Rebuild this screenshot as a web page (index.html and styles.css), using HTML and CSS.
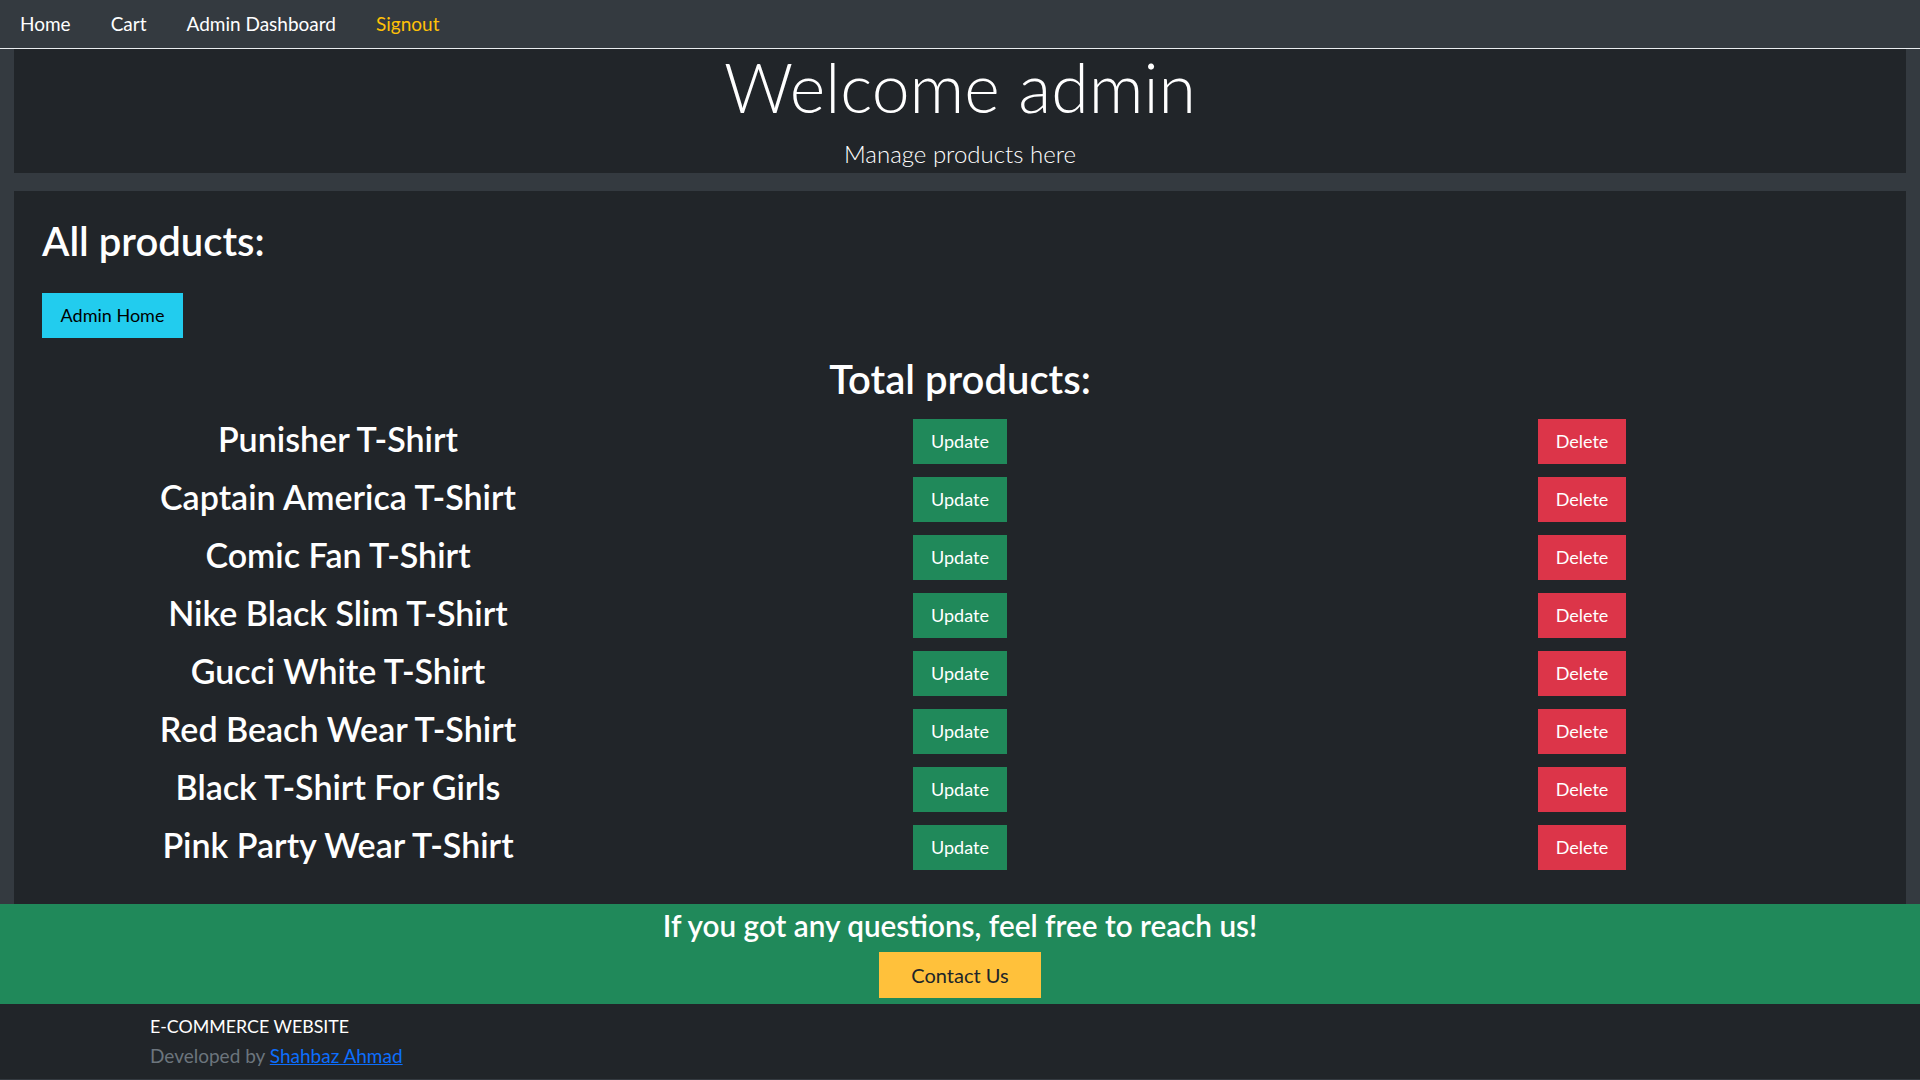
FILE: index.html
```html
<!DOCTYPE html>
<html lang="en">
<head>
<meta charset="utf-8">
<title>Admin - Products</title>
<link rel="stylesheet" href="styles.css">
</head>
<body>
<nav class="navbar">
  <a class="nav-link" href="#">Home</a>
  <a class="nav-link" href="#">Cart</a>
  <a class="nav-link" href="#">Admin Dashboard</a>
  <a class="nav-link nav-warn" href="#">Signout</a>
</nav>
<main class="wrap">
  <section class="hero">
    <h1 class="hero-title">Welcome admin</h1>
    <p class="hero-lead">Manage products here</p>
  </section>
  <section class="panel">
    <div class="panel-head">
      <h1 class="section-title">All products:</h1>
      <a class="btn btn-info" href="#">Admin Home</a>
    </div>
    <h2 class="total-title">Total products:</h2>
    <div class="product-grid">
      <div class="cell"><h2 class="product-name">Punisher T-Shirt</h2></div>
      <div class="cell"><a class="btn btn-success" href="#">Update</a></div>
      <div class="cell"><a class="btn btn-danger" href="#">Delete</a></div>

      <div class="cell"><h2 class="product-name">Captain America T-Shirt</h2></div>
      <div class="cell"><a class="btn btn-success" href="#">Update</a></div>
      <div class="cell"><a class="btn btn-danger" href="#">Delete</a></div>

      <div class="cell"><h2 class="product-name">Comic Fan T-Shirt</h2></div>
      <div class="cell"><a class="btn btn-success" href="#">Update</a></div>
      <div class="cell"><a class="btn btn-danger" href="#">Delete</a></div>

      <div class="cell"><h2 class="product-name">Nike Black Slim T-Shirt</h2></div>
      <div class="cell"><a class="btn btn-success" href="#">Update</a></div>
      <div class="cell"><a class="btn btn-danger" href="#">Delete</a></div>

      <div class="cell"><h2 class="product-name">Gucci White T-Shirt</h2></div>
      <div class="cell"><a class="btn btn-success" href="#">Update</a></div>
      <div class="cell"><a class="btn btn-danger" href="#">Delete</a></div>

      <div class="cell"><h2 class="product-name">Red Beach Wear T-Shirt</h2></div>
      <div class="cell"><a class="btn btn-success" href="#">Update</a></div>
      <div class="cell"><a class="btn btn-danger" href="#">Delete</a></div>

      <div class="cell"><h2 class="product-name">Black T-Shirt For Girls</h2></div>
      <div class="cell"><a class="btn btn-success" href="#">Update</a></div>
      <div class="cell"><a class="btn btn-danger" href="#">Delete</a></div>

      <div class="cell"><h2 class="product-name">Pink Party Wear T-Shirt</h2></div>
      <div class="cell"><a class="btn btn-success" href="#">Update</a></div>
      <div class="cell"><a class="btn btn-danger" href="#">Delete</a></div>
    </div>
  </section>
</main>
<section class="cta">
  <h3 class="cta-title">If you got any questions, feel free to reach us!</h3>
  <a class="btn btn-warning btn-lg" href="#">Contact Us</a>
</section>
<footer class="footer">
  <p class="footer-brand">E-COMMERCE WEBSITE</p>
  <p class="footer-credit">Developed by <a class="footer-link" href="#">Shahbaz Ahmad</a></p>
</footer>
</body>
</html>
```
FILE: styles.css
```css
* { box-sizing: border-box; }

html, body {
  margin: 0;
  padding: 0;
}

body {
  background: #343a40;
  color: #fff;
  font-family: Lato, "Open Sans", "DejaVu Sans", sans-serif;
  font-size: 18px;
  line-height: 1.5;
}

a { text-decoration: none; }

/* Navbar */
.navbar {
  display: flex;
  align-items: center;
  height: 49px;
  background: #343a40;
  border-bottom: 1px solid #e9ecef;
}

.nav-link {
  color: #fff;
  font-size: 19px;
  padding: 0 20px;
}

.nav-warn { color: #ffc107; }

/* Main wrapper */
.wrap {
  padding: 0 14px;
}

.hero {
  background: #212529;
  height: 124px;
  padding-top: 3px;
  text-align: center;
}

.hero-title {
  margin: 0;
  font-size: 68px;
  font-weight: 300;
  line-height: 70px;
}

.hero-lead {
  margin: 15px 0 0;
  font-size: 24px;
  font-weight: 300;
  line-height: 34px;
}

.panel {
  background: #212529;
  margin-top: 18px;
  padding: 26px 13px 34px;
}

.panel-head {
  padding: 0 15px;
}

.section-title {
  margin: 0 0 28px;
  font-size: 40px;
  font-weight: 600;
  line-height: 48px;
}

.total-title {
  margin: 17px 0 16px;
  text-align: center;
  font-size: 40px;
  font-weight: 600;
  line-height: 48px;
}

.product-grid {
  display: grid;
  grid-template-columns: repeat(3, 1fr);
  grid-auto-rows: 45px;
  row-gap: 13px;
}

.cell {
  display: flex;
  align-items: center;
  justify-content: center;
}

.product-name {
  margin: 0 0 6px;
  font-size: 34px;
  font-weight: 600;
  line-height: 40px;
}

/* Buttons */
.btn {
  display: inline-block;
  font-size: 18px;
  line-height: 27px;
  padding: 9px 16px;
  border: 0;
  text-align: center;
}

.btn-info {
  background: #22ccee;
  color: #000;
  width: 141px;
}

.btn-success {
  background: #20895a;
  color: #fff;
  width: 94px;
}

.btn-danger {
  background: #dc3549;
  color: #fff;
  width: 88px;
}

.btn-warning {
  background: #ffc13b;
  color: #212529;
}

.btn-lg {
  font-size: 20px;
  line-height: 30px;
  padding: 8px 0;
  width: 162px;
}

/* CTA */
.cta {
  background: #20895a;
  height: 100px;
  padding-top: 4px;
  text-align: center;
}

.cta-title {
  margin: 0 0 9px;
  font-size: 29.7px;
  font-weight: 600;
  line-height: 35px;
}

/* Footer */
.footer {
  background: #212529;
  height: 75px;
  padding: 8px 0 0 150px;
}

.footer p {
  margin: 0;
  line-height: 29px;
}

.footer-brand {
  color: #fff;
  font-size: 17.8px;
}

.footer-credit {
  color: #6c757d;
  font-size: 19px;
}

.footer-link {
  color: #0d6efd;
  text-decoration: underline;
}
```
